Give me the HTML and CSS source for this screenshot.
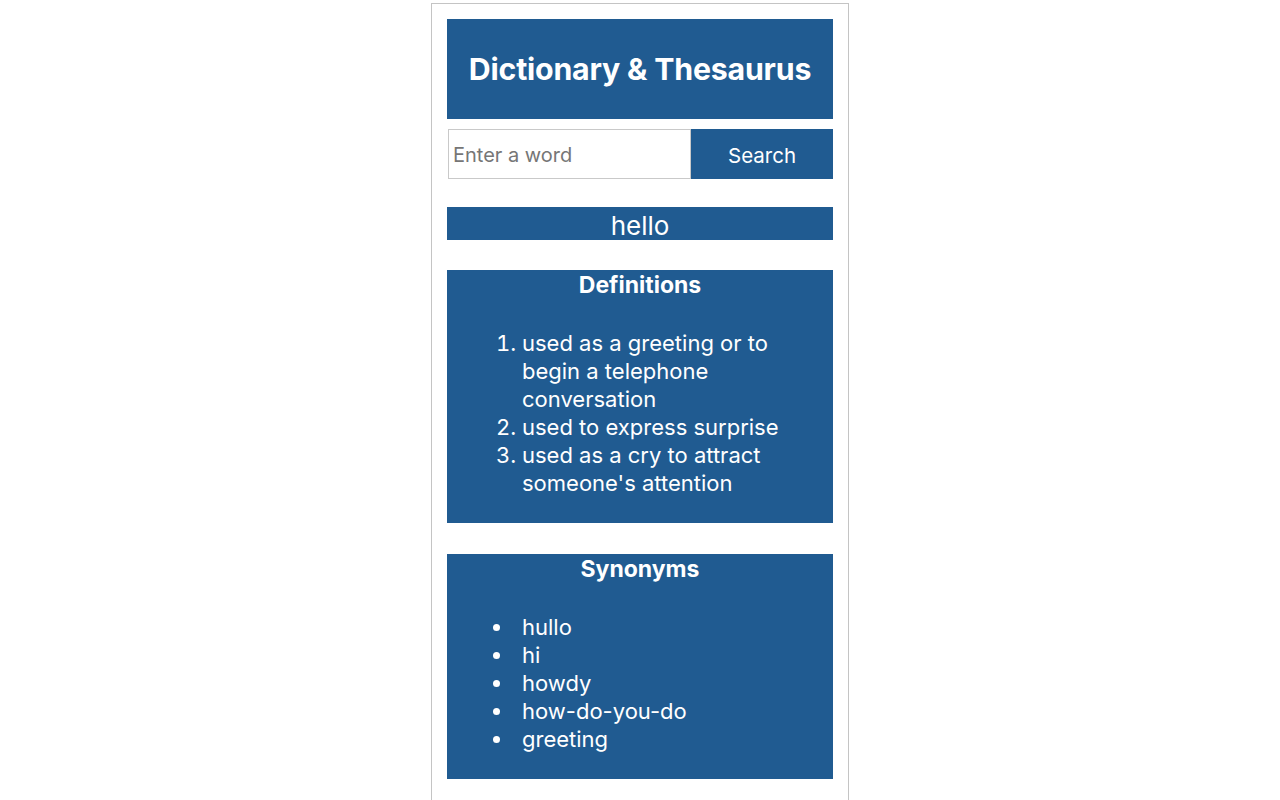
FILE: index.html
```html
<!DOCTYPE html>
<html lang="en">
<head>
<meta charset="utf-8">
<title>Dictionary &amp; Thesaurus</title>
<link rel="stylesheet" href="styles.css">
</head>
<body>
<div class="backdrop">
  <div class="popup">
    <header class="banner">
      <h1 class="title">Dictionary &amp; Thesaurus</h1>
    </header>
    <form class="search">
      <input class="search-input" type="text" placeholder="Enter a word">
      <button class="search-btn" type="button">Search</button>
    </form>
    <div class="word">hello</div>
    <section class="panel">
      <h2 class="panel-title">Definitions</h2>
      <ol class="panel-list">
        <li>used as a greeting or to begin a telephone conversation</li>
        <li>used to express surprise</li>
        <li>used as a cry to attract someone's attention</li>
      </ol>
    </section>
    <section class="panel">
      <h2 class="panel-title">Synonyms</h2>
      <ul class="panel-list bullets">
        <li>hullo</li>
        <li>hi</li>
        <li>howdy</li>
        <li>how-do-you-do</li>
        <li>greeting</li>
      </ul>
    </section>
  </div>
</div>
</body>
</html>
```

FILE: styles.css
```css
html, body {
  margin: 0;
  padding: 0;
  background: #ffffff;
  height: 100%;
  overflow: hidden;
}

body {
  font-family: Inter, "Noto Sans", "Liberation Sans", sans-serif;
  color: #ffffff;
}

.backdrop {
  padding-top: 3px;
  display: flex;
  justify-content: center;
}

.popup {
  width: 418px;
  flex: 0 0 418px;
  height: 820px;
  border: 1px solid #c4c4c4;
  background: #ffffff;
  padding: 15px 15px 0 15px;
  box-sizing: border-box;
  display: flex;
  flex-direction: column;
}

.banner {
  background: #205b91;
  height: 100px;
  display: flex;
  align-items: center;
  justify-content: center;
}

.title {
  margin: 0;
  font-size: 30.3px;
  font-weight: 700;
  letter-spacing: -0.2px;
  color: #ffffff;
}

.search {
  margin: 10px 0 0 0;
  display: grid;
  grid-template-columns: 244px 142px;
  height: 50px;
}

.search-input {
  width: 243px;
  margin: 0 0 0 1px;
  box-sizing: border-box;
  height: 50px;
  border: 1px solid #c9c9c9;
  padding: 2px 4px 0 4px;
  font-family: inherit;
  font-size: 20px;
  color: #333;
  outline: none;
}

.search-input::placeholder {
  color: #767676;
}

.search-btn {
  width: 142px;
  margin: 0;
  border: none;
  background: #205b91;
  color: #ffffff;
  font-family: inherit;
  font-size: 20.5px;
  height: 50px;
  padding: 2px 0 0 0;
}

.word {
  margin-top: 28px;
  background: #205b91;
  height: 33px;
  line-height: 37px;
  text-align: center;
  font-size: 26px;
}

.panel {
  margin-top: 30px;
  background: #205b91;
  padding: 1px 0 26px 0;
}

.panel + .panel {
  margin-top: 31px;
}

.panel-title {
  margin: 0;
  font-size: 23px;
  line-height: 28px;
  font-weight: 700;
  text-align: center;
}

.panel-list {
  margin: 30px 0 0 0;
  padding: 0 48px 0 75px;
  font-size: 22px;
  line-height: 28px;
}

.bullets {
  list-style: none;
}

.bullets li {
  position: relative;
}

.bullets li::before {
  content: "";
  position: absolute;
  left: -29px;
  top: 11px;
  width: 7px;
  height: 7px;
  border-radius: 50%;
  background: #ffffff;
}
```
